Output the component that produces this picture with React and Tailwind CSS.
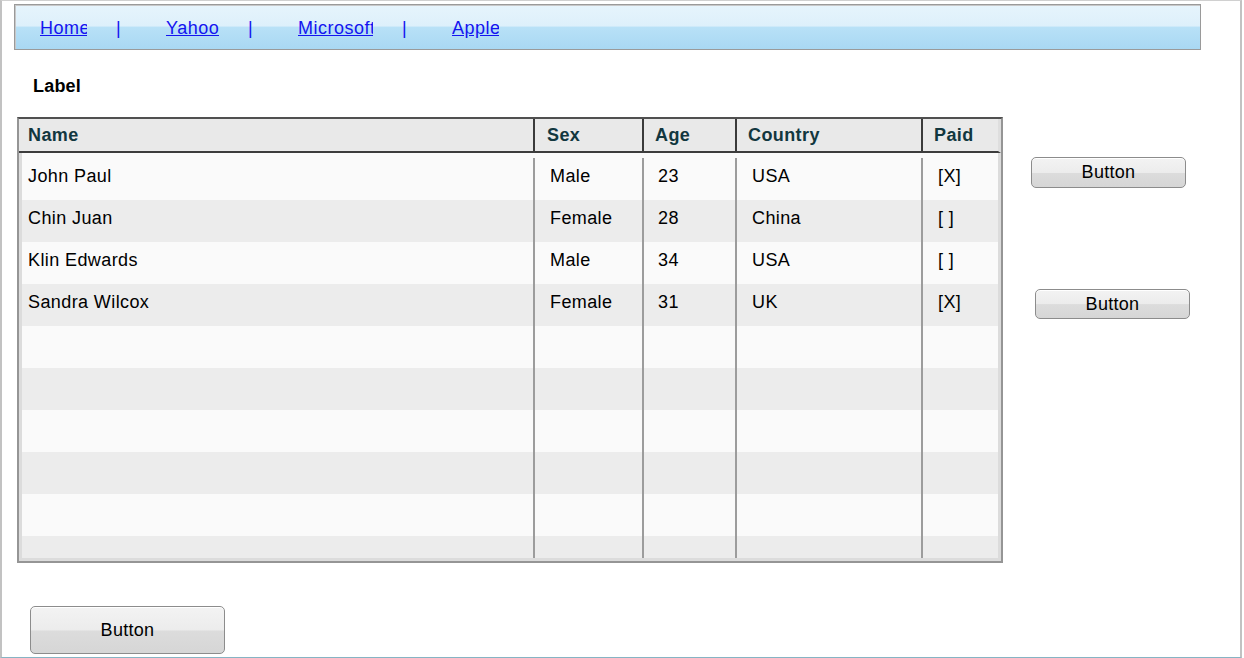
import React from 'react'

const font = { fontFamily: '"Liberation Sans", Arial, sans-serif' }

const rows = [
  { name: 'John Paul', sex: 'Male', age: '23', country: 'USA', paid: '[X]' },
  { name: 'Chin Juan', sex: 'Female', age: '28', country: 'China', paid: '[ ]' },
  { name: 'Klin Edwards', sex: 'Male', age: '34', country: 'USA', paid: '[ ]' },
  { name: 'Sandra Wilcox', sex: 'Female', age: '31', country: 'UK', paid: '[X]' },
  {}, {}, {}, {}, {}, {},
]

const links = [
  { label: 'Home', w: 'w-[47px]' },
  { label: 'Yahoo', w: 'w-[53px]' },
  { label: 'Microsoft', w: 'w-[75px]' },
  { label: 'Apple', w: 'w-[47px]' },
]

const Btn = ({ className }) => (
  <button
    className={`relative flex items-center justify-center rounded-[5px] border border-[#8c8c8c] bg-[linear-gradient(#f3f3f3_0%,#ececec_50%,#dcdcdc_52%,#d6d6d6_100%)] text-[18px] tracking-[0.3px] text-black shadow-[inset_0_1px_0_#ffffff] ${className}`}
  >
    Button
  </button>
)

const App = () => {
  return (
    <div
      style={font}
      className="w-[1242px] h-[658px] overflow-hidden bg-white border-t border-l-2 border-r-2 border-b border-t-[#d0d0d0] border-l-[#c2c2c2] border-r-[#c2c2c2] border-b-[#86b4c4]"
    >
      {/* barra de navegación */}
      <div className="ml-[12px] mt-[3px] w-[1187px] h-[46px] border border-[#9a9a9a] shadow-[inset_1px_1px_0_#c8c8c8] bg-[linear-gradient(#e6f4fc_0%,#ddf0fb_48%,#b8e1f7_50%,#a9d8f3_100%)] flex items-center pl-[25px] pt-[1px]">
        {links.map((l, i) => (
          <React.Fragment key={l.label}>
            <a
              href="#"
              className={`${l.w} overflow-hidden whitespace-nowrap text-[18px] tracking-[0.5px] text-[#1414f0] underline leading-[22px]`}
            >
              {l.label}
            </a>
            {i < links.length - 1 && (
              <a href="#" className="ml-[29px] w-[50px] text-[18px] text-[#1414f0] underline leading-[22px]">
                |
              </a>
            )}
          </React.Fragment>
        ))}
      </div>

      <div className="ml-[31px] mt-[26px] text-[18px] font-bold tracking-[0.2px] leading-[20px] text-black">
        Label
      </div>

      <div className="flex mt-[21px] ml-[15px]">
        {/* tabla */}
        <div className="w-[986px] h-[446px] border-2 border-[#959595] border-t-[#505050] bg-[#e2e2e2] overflow-hidden flex flex-col">
          <div className="flex h-[34px] bg-[#e9e9e9] border-b-2 border-[#3c3c3c] border-r-[3px] border-r-[#dedede] text-[18px] font-bold tracking-[0.4px] text-[#12373f] leading-[32px] shrink-0">
            <div className="w-[516px] pl-[9px] border-r-2 border-[#3a3a3a]">Name</div>
            <div className="w-[109px] pl-[12px] border-r-2 border-[#3a3a3a]">Sex</div>
            <div className="w-[93px] pl-[11px] border-r-2 border-[#3a3a3a]">Age</div>
            <div className="w-[186px] pl-[11px] border-r-2 border-[#3a3a3a]">Country</div>
            <div className="w-[75px] pl-[11px]">Paid</div>
          </div>
          <div className="flex-1 overflow-hidden border-l-[3px] border-r-[3px] border-b-[3px] border-[#dcdcdc] bg-[#fafafa]">
            <div className="h-[5px] bg-[#fafafa]" />
            {rows.map((r, i) => (
              <div
                key={i}
                className={`flex h-[42px] text-[18px] tracking-[0.4px] leading-[36px] text-black ${i % 2 === 0 ? 'bg-[#fafafa]' : 'bg-[#ececec]'}`}
              >
                <div className="w-[513px] pl-[6px] border-r-2 border-[#9c9c9c]">{r.name}</div>
                <div className="w-[109px] pl-[15px] border-r-2 border-[#9c9c9c]">{r.sex}</div>
                <div className="w-[93px] pl-[14px] border-r-2 border-[#9c9c9c]">{r.age}</div>
                <div className="w-[186px] pl-[15px] border-r-2 border-[#9c9c9c]">{r.country}</div>
                <div className="w-[75px] pl-[15px]">{r.paid}</div>
              </div>
            ))}
          </div>
        </div>

        <div className="flex flex-col">
          <Btn className="ml-[28px] mt-[40px] w-[155px] h-[31px]" />
          <Btn className="ml-[32px] mt-[101px] w-[155px] h-[30px]" />
        </div>
      </div>

      <Btn className="ml-[28px] mt-[43px] w-[195px] h-[48px]" />
    </div>
  )
}

export default App
